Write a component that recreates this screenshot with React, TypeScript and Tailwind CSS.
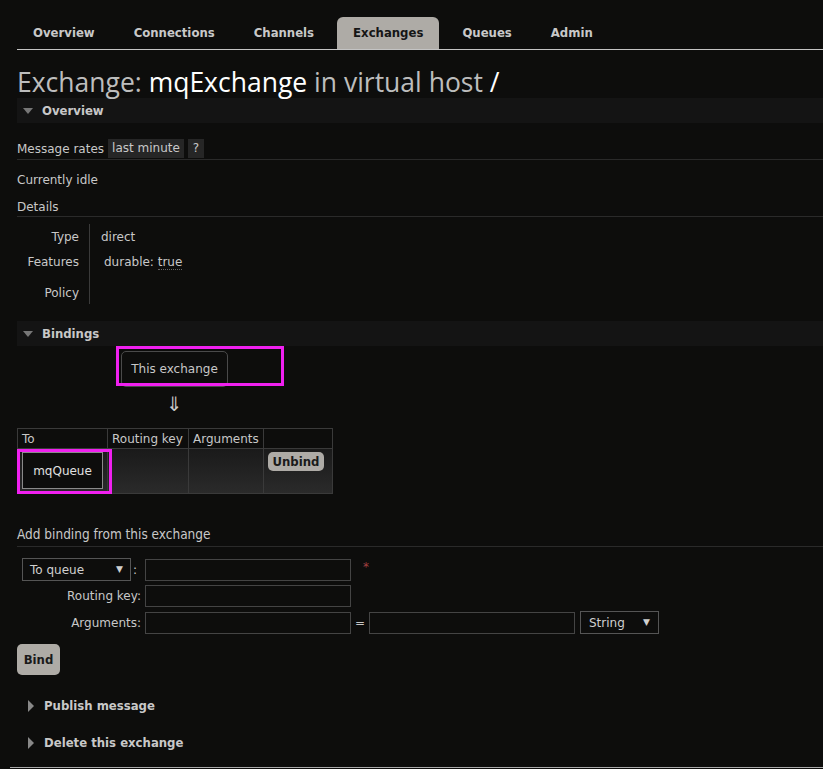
import React from 'react';

const body = { fontFamily: '"DejaVu Sans", Verdana, sans-serif' };
const cond = { fontFamily: '"DejaVu Sans Condensed", "DejaVu Sans", sans-serif' };

const tabs = ['Overview', 'Connections', 'Channels', 'Exchanges', 'Queues', 'Admin'];

const Section: React.FC<{ title: string; open?: boolean }> = ({ title, open = true }) => (
  <div className={`flex items-center h-[25px] pl-[5px] ${open ? 'bg-[#141414]' : ''}`}>
    {open ? (
      <svg width="12" height="8" viewBox="0 0 12 8" className="mr-[8px]">
        <path d="M1 1 L11 1 L6 7 Z" fill="#777" />
      </svg>
    ) : (
      <svg width="8" height="12" viewBox="0 0 8 12" className="ml-[5px] mr-[9px]">
        <path d="M1 0 L7 6 L1 12 Z" fill="#888" />
      </svg>
    )}
    <span style={cond} className="text-[13px] font-bold text-[#c8c8c8]">{title}</span>
  </div>
);

const App: React.FC = () => {
  return (
    <div style={body} className="min-h-[769px] bg-[#0d0d0c] text-[#c8c8c8] text-[12px] pl-[17px] pt-[17px] overflow-hidden relative">
      {/* Tabs */}
      <div className="flex border-b border-[#c4c4c4] h-[33px]">
        {tabs.map((t) => (
          <div
            key={t}
            style={cond}
            className={`px-[16px] mr-[7px] flex items-center text-[13px] font-bold rounded-t-[6px] ${
              t === 'Exchanges' ? 'bg-[#aeaba6] text-[#161616]' : 'text-[#c8c8c8]'
            }`}
          >
            {t}
          </div>
        ))}
      </div>

      <h1 style={{ fontFamily: '"Open Sans", sans-serif' }} className="text-[26.5px] text-[#bdbdbd] mt-[17px] leading-[31px]">
        Exchange: <span className="text-white">mqExchange</span> in virtual host <span className="text-white">/</span>
      </h1>

      <Section title="Overview" />

      <div className="mt-[16px] flex items-center border-b border-[#2a2a2a] pb-[1px]">
        <span>Message rates</span>
        <span className="bg-[#262626] px-[4px] ml-[4px] leading-[19px]">last minute</span>
        <span className="bg-[#262626] px-[5px] ml-[4px] leading-[19px]">?</span>
      </div>

      <div className="mt-[11px]">Currently idle</div>
      <div className="mt-[9px] pb-[0px] border-b border-[#2a2a2a]">Details</div>

      <div className="flex mt-[11px]">
        <div className="w-[62px] text-right pr-0 flex flex-col">
          <div className="h-[25px]">Type</div>
          <div className="h-[31px]">Features</div>
          <div className="h-[24px]">Policy</div>
        </div>
        <div className="w-px bg-[#3a3a3a] ml-[10px] h-[80px] -mt-[4px]" />
        <div className="pl-[11px] flex flex-col">
          <div className="h-[25px]">direct</div>
          <div className="h-[31px] pl-[3px]">
            durable: <span className="border-b border-dotted border-[#666]">true</span>
          </div>
        </div>
      </div>

      <div className="mt-[13px]">
        <Section title="Bindings" />
      </div>

      <div className="relative h-[82px]">
        <div className="absolute left-[104px] top-[5px] w-[107px] h-[36px] border border-[#4a4a4a] rounded-[5px] flex items-center justify-center text-[#c8c8c8]">
          This exchange
        </div>
        <div className="absolute left-[99px] top-0 w-[168px] h-[40px] border-[3px] border-[#f020f0]" />
        <div className="absolute left-[149px] top-[43px] text-[20px] text-[#c8c8c8]">⇓</div>
      </div>

      <div className="relative w-[316px]">
        <table className="border-collapse border border-[#3a3a3a] text-[12px]">
          <thead>
            <tr className="h-[20px] text-left">
              <th className="font-normal border border-[#3a3a3a] w-[90px] px-[4px]">To</th>
              <th className="font-normal border border-[#3a3a3a] w-[81px] px-[4px]">Routing key</th>
              <th className="font-normal border border-[#3a3a3a] w-[75px] px-[4px]">Arguments</th>
              <th className="font-normal border border-[#3a3a3a] w-[69px]"></th>
            </tr>
          </thead>
          <tbody>
            <tr className="h-[45px] bg-gradient-to-b from-[#1a1a1a] to-[#2b2b2b] align-top">
              <td className="border border-[#3a3a3a] p-[3px_4px_4px_4px]">
                <div className="h-[37px] w-[81px] bg-[#0d0d0c] border border-[#8a8a8a] flex items-center justify-center text-[#e0e0e0]">
                  mqQueue
                </div>
              </td>
              <td className="border border-[#3a3a3a]"></td>
              <td className="border border-[#3a3a3a]"></td>
              <td className="border border-[#3a3a3a] pt-[3px] pl-[4px]">
                <button style={cond} className="bg-[#aeaba6] text-[#1a1a1a] font-bold text-[13px] rounded-[5px] h-[19px] w-[56px] leading-[19px]">
                  Unbind
                </button>
              </td>
            </tr>
          </tbody>
        </table>
        <div className="absolute left-0 top-[21px] w-[95px] h-[45px] border-[3px] border-[#f020f0]" />
      </div>

      <div style={cond} className="mt-[30px] text-[13.5px] text-[#c8c8c8] pb-[2px] border-b border-[#2a2a2a]">
        Add binding from this exchange
      </div>

      <div className="mt-[11px] grid grid-cols-[128px_206px_18px_206px_79px] gap-x-0 gap-y-[4px] items-center">
        <div className="flex items-center pl-[5px]">
          <div className="w-[109px] h-[23px] border border-[#555] flex items-center justify-between px-[7px] text-[#d0d0d0]">
            <span>To queue</span>
            <span className="text-[9px]">▼</span>
          </div>
          <span className="ml-[2px]">:</span>
        </div>
        <div className="h-[22px] border border-[#444]" />
        <div className="col-span-3 pl-[12px] text-[#a04040] text-[12px] -mt-[6px]">*</div>

        <div className="text-right pr-[4px]">Routing key:</div>
        <div className="h-[22px] border border-[#444]" />
        <div className="col-span-3" />

        <div className="text-right pr-[4px]">Arguments:</div>
        <div className="h-[22px] border border-[#444]" />
        <div className="text-center">=</div>
        <div className="h-[22px] border border-[#444]" />
        <div className="pl-[5px]">
          <div className="w-[79px] h-[23px] border border-[#555] flex items-center justify-between px-[8px] text-[#d0d0d0]">
            <span>String</span>
            <span className="text-[9px]">▼</span>
          </div>
        </div>
      </div>

      <button style={cond} className="mt-[10px] bg-[#aeaba6] text-[#1a1a1a] font-bold text-[13px] rounded-[5px] h-[31px] w-[43px]">
        Bind
      </button>

      <div className="mt-[18px]">
        <Section title="Publish message" open={false} />
      </div>
      <div className="mt-[12px]">
        <Section title="Delete this exchange" open={false} />
      </div>

      <div className="absolute left-[10px] right-0 top-[767px] h-px bg-[#aaaaaa]" />
    </div>
  );
};

export default App;
